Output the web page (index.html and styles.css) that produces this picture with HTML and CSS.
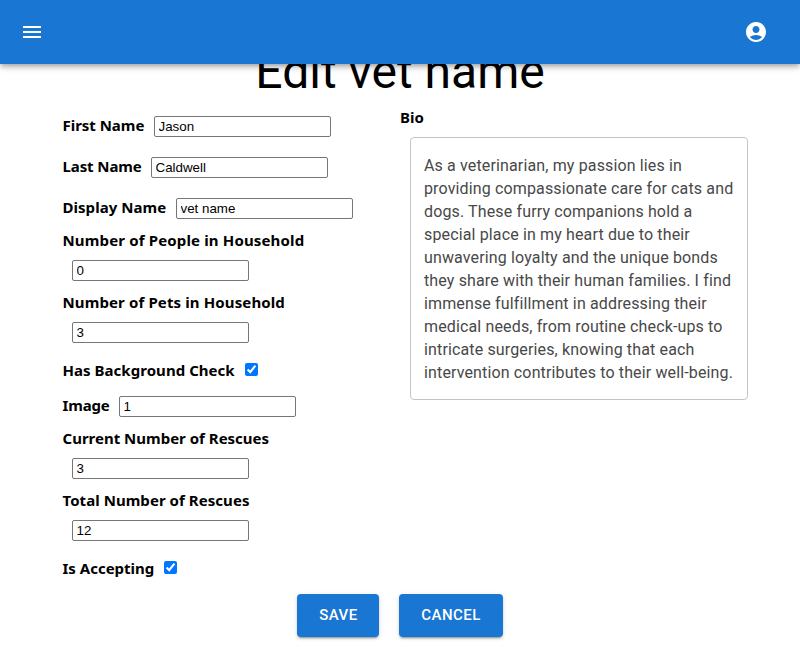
FILE: index.html
```html
<!DOCTYPE html>
<html lang="en">
<head>
<meta charset="utf-8">
<title>Edit vet name</title>
<link rel="stylesheet" href="styles.css">
</head>
<body>
<header class="appbar">
  <svg class="icon" viewBox="0 0 24 24"><path d="M3 18h18v-2H3v2zm0-5h18v-2H3v2zm0-7v2h18V6H3z"/></svg>
  <svg class="icon" viewBox="0 0 24 24"><path d="M12 2C6.48 2 2 6.48 2 12s4.48 10 10 10 10-4.48 10-10S17.52 2 12 2zm0 4c1.93 0 3.5 1.57 3.5 3.5S13.93 13 12 13s-3.5-1.57-3.5-3.5S10.07 6 12 6zm0 14c-2.03 0-4.43-.82-6.14-2.88C7.55 15.8 9.68 15 12 15s4.45.8 6.14 2.12C16.43 19.18 14.03 20 12 20z"/></svg>
</header>
<main>
  <h1 class="title">Edit vet name</h1>
  <form class="form">
    <div class="columns">
      <div class="fields">
        <div class="row"><label class="l-first">First Name</label><input type="text" value="Jason"></div>
        <div class="row"><label class="l-last">Last Name</label><input type="text" value="Caldwell"></div>
        <div class="row"><label class="l-display">Display Name</label><input type="text" value="vet name"></div>
        <div class="stack"><label class="l-people">Number of People in Household</label><input type="text" value="0"></div>
        <div class="stack"><label class="l-pets">Number of Pets in Household</label><input type="text" value="3"></div>
        <div class="row check"><label class="l-check">Has Background Check</label><input type="checkbox" checked></div>
        <div class="row image"><label class="l-image">Image</label><input type="text" value="1"></div>
        <div class="stack"><label class="l-current">Current Number of Rescues</label><input type="text" value="3"></div>
        <div class="stack"><label class="l-total">Total Number of Rescues</label><input type="text" value="12"></div>
        <div class="row check"><label class="l-accept">Is Accepting</label><input type="checkbox" checked></div>
      </div>
      <div class="bio">
        <label class="l-bio">Bio</label>
        <div class="bio-box">As a veterinarian, my passion lies in<br>providing compassionate care for cats and<br>dogs. These furry companions hold a<br>special place in my heart due to their<br>unwavering loyalty and the unique bonds<br>they share with their human families. I find<br>immense fulfillment in addressing their<br>medical needs, from routine check-ups to<br>intricate surgeries, knowing that each<br>intervention contributes to their well-being.</div>
      </div>
    </div>
    <div class="actions">
      <button type="button" class="save">Save</button>
      <button type="button" class="cancel">Cancel</button>
    </div>
  </form>
</main>
</body>
</html>
```

FILE: styles.css
```css
* { box-sizing: border-box; }
body { margin: 0; height: 647px; overflow: hidden; background: #fff; color: #000; }
.appbar {
  position: relative; z-index: 1; height: 64px; padding: 0 32px 0 20px;
  display: flex; align-items: center; justify-content: space-between;
  background: #1976d2;
  box-shadow: 0 2px 4px -1px rgba(0,0,0,.2), 0 4px 5px rgba(0,0,0,.14), 0 1px 10px rgba(0,0,0,.12);
}
.icon { width: 24px; height: 24px; fill: #fff; }
.title {
  margin: -20px 0 0; height: 56px; text-align: center;
  font: 400 48px/56px Roboto, sans-serif;
}
.columns { display: flex; height: 486px; }
.fields { width: 338px; margin-left: 62px; padding-top: 6px; }
label {
  font: 700 15px/22px "Noto Sans", sans-serif;
  white-space: nowrap;
}
.fields label { padding-left: .5px; }
.row { display: flex; align-items: center; height: 41px; }
.row label { width: var(--w); margin-right: 10px; padding-bottom: 4px; }
.l-first { --w: 82px; letter-spacing: -.03px; }
.l-last { --w: 79px; letter-spacing: -.1px; }
.l-display { --w: 104px; letter-spacing: .04px; }
.l-people { letter-spacing: .15px; }
.l-pets { letter-spacing: .12px; }
.l-check { --w: 173px; letter-spacing: .04px; }
.l-image { --w: 47px; letter-spacing: -.15px; }
.l-total { letter-spacing: .05px; }
.l-accept { --w: 92px; }
input[type="text"] {
  width: 177px; height: 21px; margin: 0; padding: 1px 2px 1px 3.5px;
  border: 1px solid #767676; border-radius: 2px;
  font: 13.333px/15px "Liberation Sans", sans-serif;
}
input[type="checkbox"] { width: 13px; height: 13px; margin: 0 0 2px; }
.stack { display: flex; flex-direction: column; height: 62px; }
.stack label { height: 31px; }
.stack input { margin-left: 10px; }
.check { height: 34px; }
.row.check label { padding-bottom: 0; }
.image { height: 40px; padding-bottom: 1px; }
.bio { width: 348px; }
.bio label { display: block; margin-top: 6px; }
.bio-box {
  width: 338px; height: 263px; margin: 9px 0 0 10px; padding: 15.5px 13px;
  border: 1px solid #c4c4c4; border-radius: 4px;
  color: #484848; font: 400 16px/23px Roboto, sans-serif; letter-spacing: .14px; white-space: nowrap;
}
.actions { display: flex; justify-content: center; gap: 20px; margin-top: 8px; }
button {
  height: 43px; padding: 0 0 2px 1px; border: 0; border-radius: 4px;
  background: #1976d2; color: #fff; text-transform: uppercase;
  font: 500 15px/26px Roboto, sans-serif; letter-spacing: .43px;
  box-shadow: 0 3px 1px -2px rgba(0,0,0,.2), 0 2px 2px rgba(0,0,0,.14), 0 1px 5px rgba(0,0,0,.12);
}
.save { width: 82px; }
.cancel { width: 104px; padding-left: 0; }
```
